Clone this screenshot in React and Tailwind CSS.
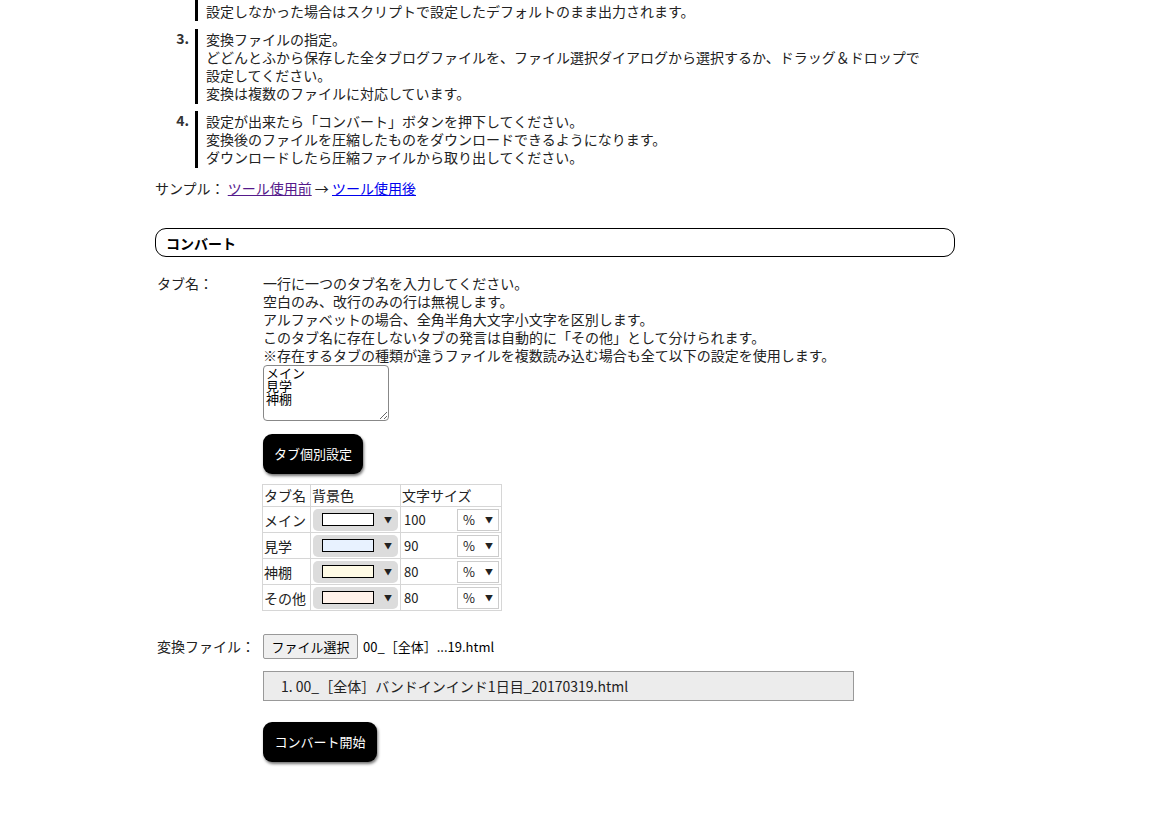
import React from 'react';

const font = { fontFamily: '"Noto Sans CJK JP", "Liberation Sans", sans-serif' };

const Step = ({ num, children }) => (
  <div className="flex">
    <div className="w-[40px] pr-[6px] text-right font-bold text-[#333]">{num}</div>
    <div className="border-l-[3px] border-black pl-[8px] pt-[1px] pb-[2px]">{children}</div>
  </div>
);

const ColorSelect = ({ color }) => (
  <div className="flex items-center h-[22px] mx-[2px] rounded-[5px] bg-[#dcdcdc] pl-[9px] pr-[6px]">
    <div className="w-[52px] h-[13px] border border-black" style={{ background: color }} />
    <span className="ml-auto text-[8px]">▼</span>
  </div>
);

const rows = [
  { name: 'メイン', color: '#ffffff', size: '100' },
  { name: '見学', color: '#e8f2ff', size: '90' },
  { name: '神棚', color: '#fffbe6', size: '80' },
  { name: 'その他', color: '#fff2ea', size: '80' },
];

const BlackButton = ({ children, w }) => (
  <button className={`h-[40px] ${w} rounded-[9px] bg-black text-white text-[13px] shadow-[1px_2px_3px_rgba(0,0,0,0.55)]`}>
    {children}
  </button>
);

export default function App() {
  return (
    <div className="bg-white text-[14px] leading-[18px] text-[#222] min-h-[820px]" style={font}>
      <div className="ml-[155px] w-[800px]">
        {/* Steps */}
        <div className="flex">
          <div className="w-[40px]" />
          <div className="border-l-[3px] border-black pl-[8px] pt-[2px] pb-[1px]">
            設定しなかった場合はスクリプトで設定したデフォルトのまま出力されます。
          </div>
        </div>
        <div className="mt-[8px]">
          <Step num="3.">
            変換ファイルの指定。<br />
            どどんとふから保存した全タブログファイルを、ファイル選択ダイアログから選択するか、ドラッグ＆ドロップで<br />
            設定してください。<br />
            変換は複数のファイルに対応しています。
          </Step>
        </div>
        <div className="mt-[7px]">
          <Step num="4.">
            設定が出来たら「コンバート」ボタンを押下してください。<br />
            変換後のファイルを圧縮したものをダウンロードできるようになります。<br />
            ダウンロードしたら圧縮ファイルから取り出してください。
          </Step>
        </div>
        <div className="mt-[11px]">
          サンプル： <a href="#" className="underline text-[#551a8b]">ツール使用前</a> → <a href="#" className="underline text-[#0000ee]">ツール使用後</a>
        </div>

        {/* Convert header */}
        <div className="mt-[31px] h-[29px] rounded-[11px] border border-black flex items-center pl-[10px] font-bold text-black">
          コンバート
        </div>

        {/* Tab names */}
        <div className="mt-[17px] flex">
          <div className="w-[108px] pl-[2px]">タブ名：</div>
          <div className="flex-1">
            <div>
              一行に一つのタブ名を入力してください。<br />
              空白のみ、改行のみの行は無視します。<br />
              アルファベットの場合、全角半角大文字小文字を区別します。<br />
              このタブ名に存在しないタブの発言は自動的に「その他」として分けられます。<br />
              ※存在するタブの種類が違うファイルを複数読み込む場合も全て以下の設定を使用します。
            </div>
            <textarea
              className="block mt-[1px] w-[126px] h-[56px] border border-[#888] rounded-[4px] px-[2px] text-[13px] leading-[13px] text-black resize-y"
              defaultValue={'メイン\n見学\n神棚'}
              style={font}
            />
            <div className="mt-[13px]">
              <BlackButton w="w-[100px]">タブ個別設定</BlackButton>
            </div>
            <table className="mt-[10px] -ml-[1px] border-collapse text-[14px] text-[#222]">
              <thead>
                <tr className="h-[22px]">
                  <th className="border border-[#d6d6d6] w-[48px] text-left font-normal px-[1px] py-0 align-top leading-[20px]">タブ名</th>
                  <th className="border border-[#d6d6d6] w-[90px] text-left font-normal px-[1px] py-0 align-top leading-[20px]">背景色</th>
                  <th className="border border-[#d6d6d6] w-[101px] text-left font-normal px-[1px] py-0 align-top leading-[20px]">文字サイズ</th>
                </tr>
              </thead>
              <tbody>
                {rows.map((r) => (
                  <tr key={r.name} className="h-[26px]">
                    <td className="border border-[#d6d6d6] px-[1px]">{r.name}</td>
                    <td className="border border-[#d6d6d6] p-0">
                      <ColorSelect color={r.color} />
                    </td>
                    <td className="border border-[#d6d6d6] p-0">
                      <div className="flex items-center">
                        <span className="pl-[3px] text-[13px] w-[56px]">{r.size}</span>
                        <div className="flex items-center h-[22px] w-[42px] border border-[#ccc] pl-[5px] pr-[5px] text-[13px]">
                          %<span className="ml-auto text-[8px]">▼</span>
                        </div>
                      </div>
                    </td>
                  </tr>
                ))}
              </tbody>
            </table>
          </div>
        </div>

        {/* File */}
        <div className="mt-[23px] flex">
          <div className="w-[108px] pl-[2px] pt-[3px]">変換ファイル：</div>
          <div className="flex-1">
            <div className="flex items-center">
              <button className="h-[25px] w-[95px] border border-[#999] rounded-[2px] bg-[#efefef] text-[13px] text-black">ファイル選択</button>
              <span className="ml-[5px] text-[13px] text-black">00_［全体］...19.html</span>
            </div>
            <div className="mt-[12px] w-[591px] h-[30px] border border-[#999] bg-[#ececec] flex items-center pl-[17px] text-[14px] text-[#222]">
              1. 00_［全体］バンドインインド1日目_20170319.html
            </div>
            <div className="mt-[21px]">
              <BlackButton w="w-[114px]">コンバート開始</BlackButton>
            </div>
          </div>
        </div>
      </div>
    </div>
  );
}
